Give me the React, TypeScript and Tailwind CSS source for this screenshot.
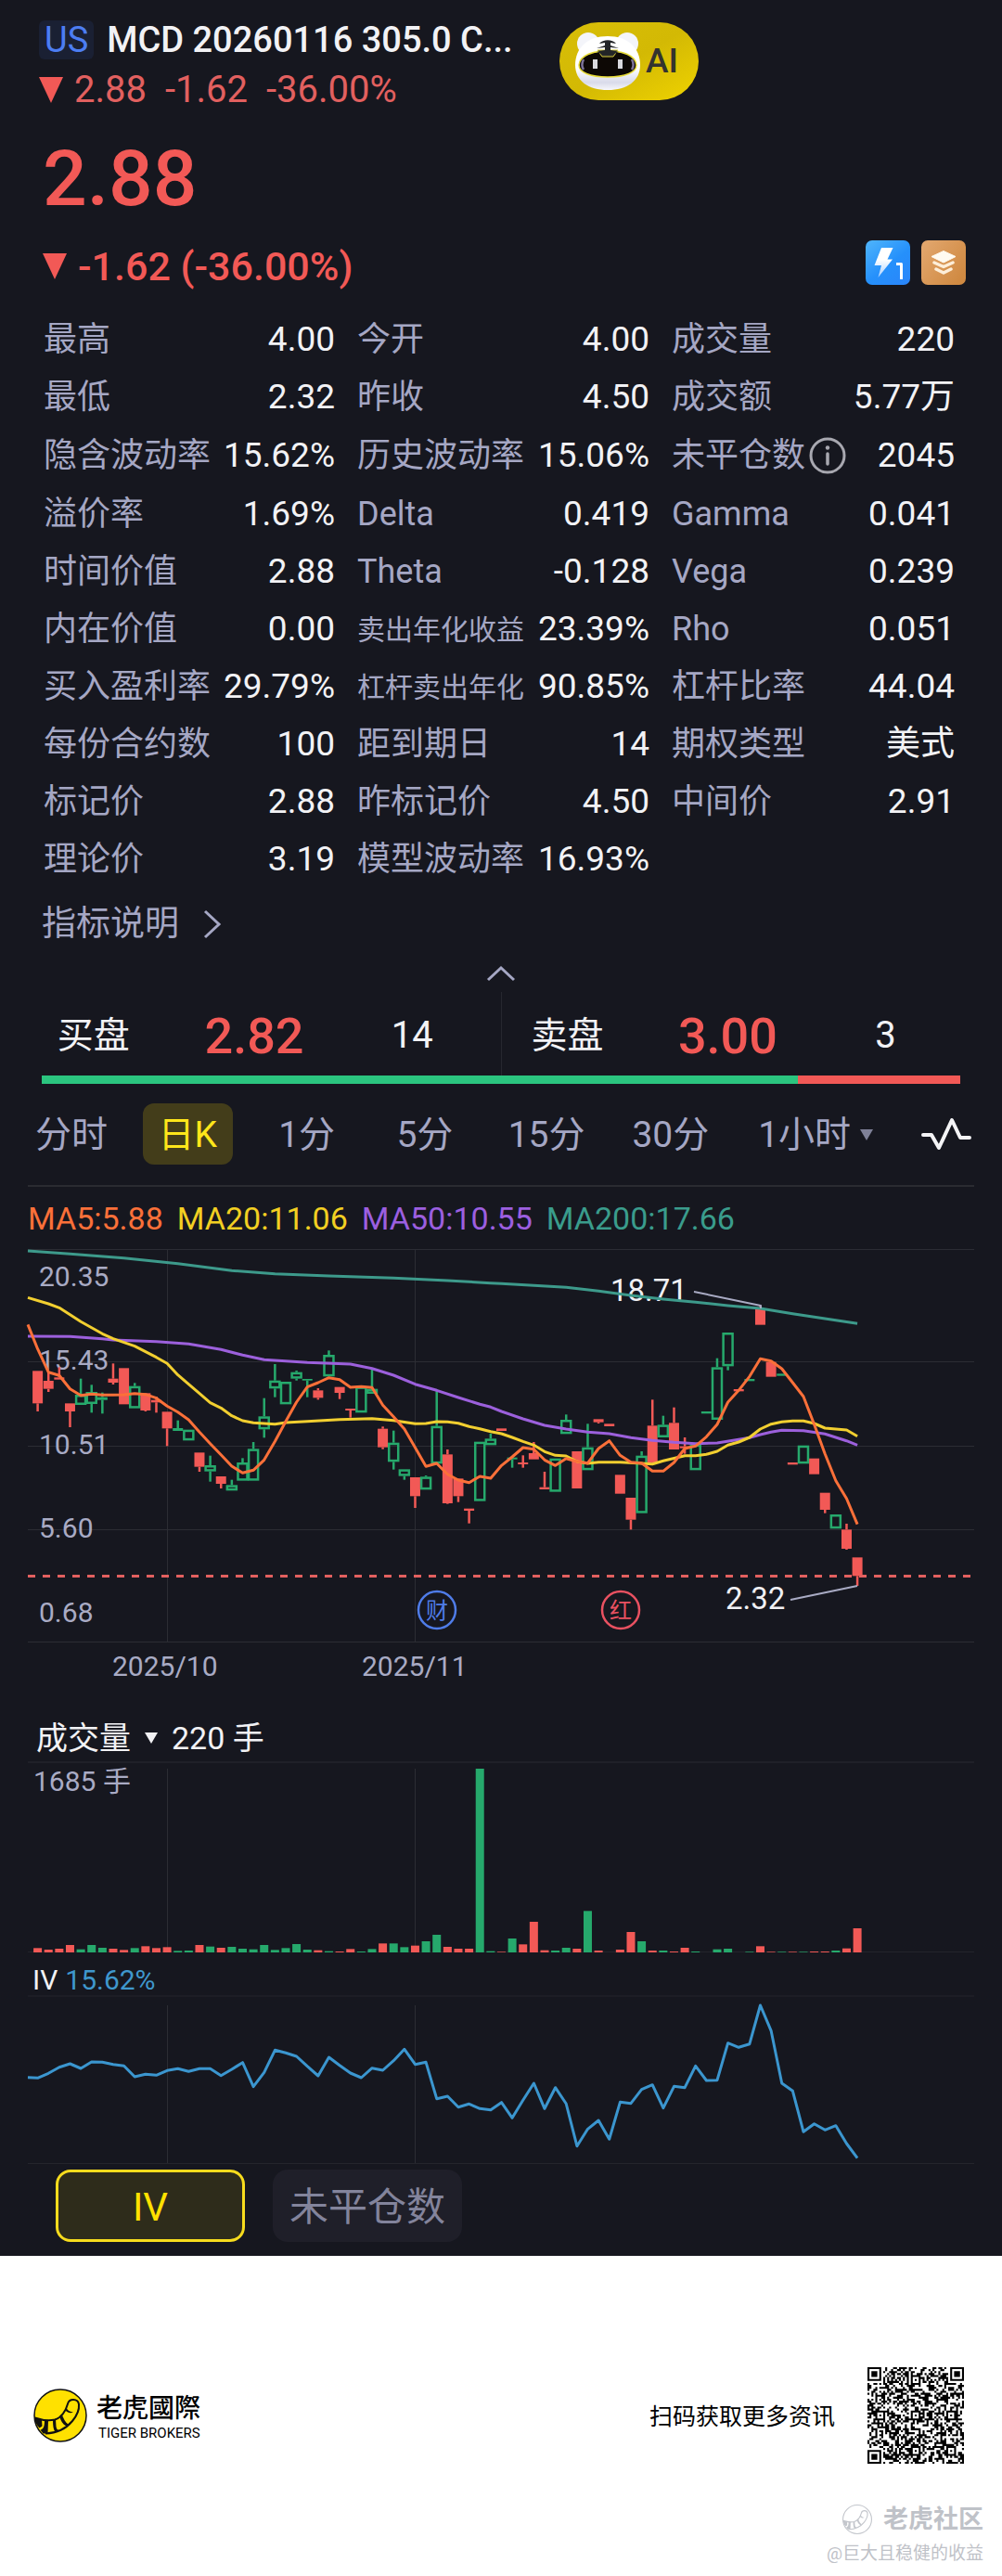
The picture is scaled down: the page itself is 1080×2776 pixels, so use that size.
import React from "react";

const RED = "#f25956";
const GREEN = "#26a96c";

type Stat = { label: string; value: string; small?: boolean; info?: boolean };

const STATS: Stat[] = [
  { label: "最高", value: "4.00" },
  { label: "今开", value: "4.00" },
  { label: "成交量", value: "220" },
  { label: "最低", value: "2.32" },
  { label: "昨收", value: "4.50" },
  { label: "成交额", value: "5.77万" },
  { label: "隐含波动率", value: "15.62%" },
  { label: "历史波动率", value: "15.06%" },
  { label: "未平仓数", value: "2045", info: true },
  { label: "溢价率", value: "1.69%" },
  { label: "Delta", value: "0.419" },
  { label: "Gamma", value: "0.041" },
  { label: "时间价值", value: "2.88" },
  { label: "Theta", value: "-0.128" },
  { label: "Vega", value: "0.239" },
  { label: "内在价值", value: "0.00" },
  { label: "卖出年化收益", value: "23.39%", small: true },
  { label: "Rho", value: "0.051" },
  { label: "买入盈利率", value: "29.79%" },
  { label: "杠杆卖出年化", value: "90.85%", small: true },
  { label: "杠杆比率", value: "44.04" },
  { label: "每份合约数", value: "100" },
  { label: "距到期日", value: "14" },
  { label: "期权类型", value: "美式" },
  { label: "标记价", value: "2.88" },
  { label: "昨标记价", value: "4.50" },
  { label: "中间价", value: "2.91" },
  { label: "理论价", value: "3.19" },
  { label: "模型波动率", value: "16.93%" },
];

/* One trading day: high, body top, body bottom, low (three units per pixel), rising or falling, volume. */
type Day = [number, number, number, number, "U" | "D", number];
const DAYS: Day[] = [
  [442, 442, 547, 573, "D", 14],
  [445, 474, 500, 510, "D", 9],
  [430, 463, 470, 470, "D", 12],
  [547, 547, 573, 624, "D", 24],
  [467, 519, 552, 552, "U", 10],
  [487, 510, 549, 577, "U", 24],
  [512, 527, 536, 580, "U", 15],
  [418, 467, 480, 486, "D", 12],
  [433, 433, 550, 550, "D", 8],
  [481, 491, 563, 563, "U", 14],
  [514, 514, 570, 573, "D", 20],
  [525, 536, 544, 577, "D", 14],
  [574, 574, 628, 685, "D", 17],
  [602, 627, 636, 636, "U", 5],
  [632, 632, 667, 667, "U", 6],
  [706, 706, 752, 768, "D", 24],
  [716, 747, 767, 800, "U", 19],
  [783, 783, 807, 822, "D", 15],
  [794, 811, 829, 829, "U", 18],
  [724, 738, 797, 797, "U", 12],
  [672, 694, 797, 797, "U", 10],
  [530, 589, 631, 658, "U", 24],
  [420, 473, 499, 527, "U", 8],
  [477, 477, 550, 550, "U", 14],
  [441, 446, 467, 473, "U", 27],
  [468, 468, 473, 527, "U", 9],
  [498, 505, 529, 535, "D", 7],
  [376, 390, 460, 460, "U", 4],
  [494, 494, 513, 533, "D", 3],
  [564, 564, 570, 593, "D", 11],
  [493, 493, 577, 577, "U", 3],
  [435, 500, 516, 516, "U", 11],
  [622, 629, 689, 695, "D", 29],
  [635, 674, 736, 761, "U", 29],
  [760, 760, 782, 794, "U", 17],
  [786, 786, 847, 885, "D", 22],
  [780, 784, 826, 826, "U", 36],
  [503, 620, 742, 742, "U", 57],
  [696, 712, 870, 872, "D", 18],
  [790, 790, 847, 866, "D", 12],
  [887, 887, 894, 935, "D", 12],
  [671, 671, 863, 863, "U", 594],
  [645, 661, 682, 682, "U", 4],
  [628, 628, 636, 636, "D", 2],
  [722, 722, 728, 755, "U", 45],
  [715, 738, 744, 755, "D", 26],
  [672, 708, 728, 728, "D", 99],
  [768, 818, 825, 825, "D", 7],
  [725, 725, 833, 833, "U", 6],
  [583, 600, 646, 646, "U", 15],
  [702, 702, 822, 822, "D", 12],
  [613, 689, 763, 763, "U", 134],
  [598, 598, 608, 612, "D", 6],
  [613, 613, 621, 621, "D", 0],
  [778, 778, 839, 839, "D", 9],
  [852, 852, 923, 955, "D", 66],
  [702, 716, 902, 902, "U", 36],
  [535, 619, 740, 740, "D", 6],
  [587, 616, 657, 657, "U", 6],
  [560, 610, 696, 696, "D", 3],
  [657, 686, 692, 710, "D", 15],
  [680, 680, 763, 763, "U", 3],
  [573, 573, 580, 580, "U", 0],
  [401, 430, 600, 600, "U", 10],
  [318, 318, 427, 440, "U", 12],
  [501, 501, 508, 508, "D", 0],
  [468, 468, 475, 475, "U", 2],
  [230, 241, 293, 293, "D", 20],
  [413, 413, 461, 461, "D", 2],
  [451, 451, 458, 458, "U", 2],
  [738, 738, 745, 745, "D", 2],
  [683, 683, 742, 742, "U", 2],
  [725, 725, 776, 776, "D", 3],
  [836, 836, 891, 902, "D", 3],
  [906, 906, 952, 952, "U", 6],
  [936, 955, 1017, 1020, "D", 13],
  [1045, 1045, 1105, 1137, "D", 78],
];

type Pt = [number, number];

const MA5 = [
  371, 446, 457, 500, 521, 517, 520, 520, 519, 515, 518, 530, 556, 575, 600, 640, 677, 713, 750, 772, 763, 730, 670,
  605, 543, 494, 480, 464, 470, 495, 493, 496, 553, 590, 630, 690, 751, 741, 776, 795, 803, 783, 789, 748, 720, 690,
  695, 730, 748, 725, 735, 740, 693, 668, 715, 737, 740, 766, 766, 738, 693, 685, 655, 615, 543, 505, 460, 403, 410,
  435, 480, 525, 615, 710, 797, 855, 938,
].map((y, i): Pt => [i, y]);

const MA20: Pt[] = [
  [1, 225], [2, 238], [3, 260], [4, 283], [6, 322], [7, 338], [9, 362], [11, 398], [12, 418], [13, 455], [14, 485],
  [15, 515], [16, 545], [17, 562], [18, 587], [19, 603], [20, 610], [22, 614], [23, 609], [25, 605], [28, 599],
  [31, 596], [33, 602], [35, 613], [36, 612], [37, 606], [38, 607], [39, 611], [40, 622], [41, 629], [42, 638],
  [43, 645], [44, 657], [45, 670], [46, 682], [47, 703], [48, 715], [49, 717], [50, 735], [51, 741], [52, 737],
  [54, 737], [56, 741], [57, 743], [58, 733], [60, 716], [61, 716], [62, 712], [63, 702], [64, 682], [65, 672],
  [66, 657], [67, 630], [68, 614], [69, 607], [70, 604], [71, 604], [72, 612], [73, 627], [74, 630], [75, 633],
  [76, 653],
];

const MA50: Pt[] = [
  [3, 331], [6, 338], [7, 342], [11, 347], [14, 355], [15, 361], [17, 373], [19, 391], [21, 406], [25, 415],
  [29, 420], [31, 434], [33, 456], [35, 485], [37, 505], [39, 528], [41, 550], [42, 559], [43, 573], [45, 597],
  [47, 618], [49, 630], [51, 640], [53, 645], [55, 658], [57, 667], [59, 673], [61, 677], [63, 675], [65, 664],
  [66, 658], [67, 648], [68, 640], [69, 634], [71, 635], [73, 646], [75, 668], [76, 682],
];

const MA200: Pt[] = [
  [3, 64], [8, 77], [13, 95], [15, 104], [18, 118], [22, 128], [27, 135], [33, 142], [38, 150], [42, 158], [43, 160],
  [49, 172], [52, 184], [55, 198], [58, 210], [61, 220], [64, 231], [67, 240], [70, 257], [73, 273], [76, 289],
];

const IV = [
  328, 313, 293, 282, 297, 276, 277, 284, 289, 324, 316, 319, 304, 298, 307, 298, 298, 320, 300, 278, 356, 310, 238,
  247, 258, 290, 321, 261, 287, 312, 327, 296, 303, 272, 235, 284, 277, 395, 387, 422, 412, 427, 431, 407, 457, 400,
  345, 427, 359, 411, 548, 493, 465, 526, 406, 410, 365, 350, 425, 355, 359, 289, 336, 335, 215, 229, 218, 93, 175,
  345, 370, 502, 476, 496, 482, 540, 587,
].map((y, i): Pt => [i, y]);

const dayX = (i: number) => 40.6 + i * 11.625;
const linePath = (startY: number, pts: Pt[]) =>
  `M30 ${startY / 3}` + pts.map(([i, y]) => `L${dayX(i).toFixed(1)} ${(y / 3).toFixed(1)}`).join("");

function Candle({ day, index }: { day: Day; index: number }) {
  const [high, top, bottom, low, dir] = day;
  const x = dayX(index);
  const t = top / 3;
  const b = bottom / 3;
  const color = dir === "U" ? GREEN : RED;
  const hollow = dir === "U" && b - t > 4;
  return (
    <g>
      {high < top && <rect x={x - 1.25} y={high / 3} width={2.5} height={t - high / 3} fill={color} />}
      {low > bottom && <rect x={x - 1.25} y={b} width={2.5} height={(low - bottom) / 3} fill={color} />}
      {hollow ? (
        <rect x={x - 5} y={t + 1.25} width={10} height={b - t - 2.5} fill="none" stroke={color} strokeWidth={2.5} />
      ) : (
        <rect x={x - 5.5} y={t} width={11} height={b - t} fill={color} />
      )}
    </g>
  );
}

function PriceChart() {
  return (
    <svg viewBox="0 10 1080 480" className="block h-auto w-full" role="img" aria-label="日K线图">
      <g stroke="#2c2d34" strokeWidth={1}>
        {[16.5, 137.5, 228.5, 318.5, 439.5].map((y) => (
          <line key={y} x1={30} x2={1050} y1={y} y2={y} />
        ))}
        <line x1={180.5} x2={180.5} y1={16} y2={439} />
        <line x1={447.5} x2={447.5} y1={16} y2={439} />
      </g>
      <g fill="#a9abc4" fontSize={30}>
        <text x={42} y={56}>20.35</text>
        <text x={42} y={146}>15.43</text>
        <text x={42} y={237}>10.51</text>
        <text x={42} y={327}>5.60</text>
        <text x={42} y={418}>0.68</text>
        <text x={121} y={476}>2025/10</text>
        <text x={390} y={476}>2025/11</text>
      </g>
      <g fill="#f0f0f4" fontSize={33}>
        <text x={658} y={72}>18.71</text>
        <text x={782} y={404}>2.32</text>
      </g>
      {DAYS.map((d, i) => (
        <Candle key={i} day={d} index={i} />
      ))}
      <line x1={30} x2={1046} y1={368.5} y2={368.5} stroke="#e2605f" strokeWidth={3} strokeDasharray="8 8" />
      <g fill="none" strokeLinejoin="round">
        <path d={linePath(54, MA200)} stroke="#3d9a8b" strokeWidth={3} />
        <path d={linePath(330, MA50)} stroke="#9c60dc" strokeWidth={3} />
        <path d={linePath(205, MA20)} stroke="#f2cf30" strokeWidth={3} />
        <path d={linePath(292, MA5)} stroke="#fb7039" strokeWidth={3} />
        <path d="M748 62 820 77v3M852 394l72-15" stroke="#a9abc4" strokeWidth={2} />
      </g>
      <g fontSize={24} textAnchor="middle">
        <circle cx={471} cy={405} r={20} fill="none" stroke="#4f7ce8" strokeWidth={2.5} />
        <text x={471} y={414} fill="#4f7ce8">财</text>
        <circle cx={669} cy={405} r={20} fill="none" stroke="#e95161" strokeWidth={2.5} />
        <text x={669} y={414} fill="#e95161">红</text>
      </g>
    </svg>
  );
}

function VolumeChart() {
  return (
    <svg viewBox="0 0 1080 210" className="block h-auto w-full" role="img" aria-label="成交量柱状图">
      <line x1={30} x2={1050} y1={1} y2={1} stroke="#1f2028" strokeWidth={2} />
      <line x1={30} x2={1050} y1={205.5} y2={205.5} stroke="#24252b" />
      <path d="M180.5 8V206M447.5 8V206" stroke="#2c2d34" />
      <text x={36} y={32} fontSize={30} fill="#a9abc4">1685 手</text>
      {DAYS.map(([, , , , dir, v], i) => (
        <rect key={i} x={dayX(i) - 4.5} y={206 - v / 3} width={9} height={v / 3} fill={dir === "U" ? GREEN : RED} />
      ))}
    </svg>
  );
}

function IvChart() {
  return (
    <svg viewBox="0 20 1080 184" className="block h-auto w-full" role="img" aria-label="IV走势图">
      <line x1={30} x2={1050} y1={21} y2={21} stroke="#24252c" strokeWidth={1} />
      <line x1={30} x2={1050} y1={201.5} y2={201.5} stroke="#24252c" strokeWidth={1} />
      <path d="M180.5 31V201M447.5 31V201" stroke="#2c2d34" />
      <path d={linePath(326, IV)} fill="none" stroke="#3b96cf" strokeWidth={3} strokeLinejoin="round" />
    </svg>
  );
}

function DownTriangle() {
  return (
    <svg viewBox="0 0 26 28" className="h-7 w-[26px] shrink-0" aria-hidden="true">
      <path d="M0 0h26L13 28z" fill={RED} />
    </svg>
  );
}

function TigerBot() {
  return (
    <svg viewBox="0 0 72 64" className="h-16 w-[72px] shrink-0" aria-hidden="true">
      <defs>
        <linearGradient id="bot-face" x1="0" y1="0" x2="0" y2="1">
          <stop offset="0.6" stopColor="#fff" />
          <stop offset="0.86" stopColor="#d9dbea" />
          <stop offset="1" stopColor="#f7f7fc" />
        </linearGradient>
      </defs>
      <circle cx="15" cy="13" r="12" fill="#f4f5fa" />
      <circle cx="57" cy="13" r="12" fill="#f4f5fa" />
      <path d="M36 5C14 5 1 18 1 36c0 17 14 27 35 27s35-10 35-27C71 18 58 5 36 5z" fill="url(#bot-face)" />
      <path
        d="M36 22C20 20 6 26 5 36c0 8 12 13 31 13s31-5 31-13C66 26 52 20 36 22z"
        fill="#0d0805"
        stroke="#e8dc3a"
        strokeWidth="1.5"
      />
      <path d="M10 30c-2 4-2 8 0 11M62 30c2 4 2 8 0 11" fill="none" stroke="#7c7399" strokeWidth="2.5" />
      <path d="M25 20h22l-5 7H30z" fill="#2b2b2b" stroke="#d6cc3c" strokeWidth="1" />
      <path
        d="M27 13c4-5 14-5 18 0l-6-1v3l9 3-9-1v3l9 2-7 3H31l-7-3 9-2v-3l-9 1 9-3v-3z"
        fill="#222427"
      />
      <rect x="20" y="30" width="5" height="10" fill="#d9d9de" />
      <rect x="47" y="30" width="5" height="10" fill="#d9d9de" />
    </svg>
  );
}

function FlashIcon() {
  return (
    <svg viewBox="0 0 48 48" className="size-12" aria-hidden="true">
      <defs>
        <linearGradient id="flash-bg" x1="0.1" y1="0" x2="0.9" y2="1">
          <stop offset="0" stopColor="#4cb2fb" />
          <stop offset="0.55" stopColor="#2590fb" />
          <stop offset="1" stopColor="#2a86fa" />
        </linearGradient>
        <linearGradient id="flash-fg" x1="0" y1="0" x2="0" y2="1">
          <stop offset="0.4" stopColor="#fff" />
          <stop offset="1" stopColor="#a8d0ff" />
        </linearGradient>
      </defs>
      <rect width="48" height="48" rx="7" fill="url(#flash-bg)" />
      <path d="M17 8h12.500l-6 12.500H29L13.500 40l3.500-13H9.500z" fill="url(#flash-fg)" />
      <path d="M33 25.500h5.500V42" fill="none" stroke="#fff" strokeWidth="3" strokeLinejoin="round" />
    </svg>
  );
}

function LayersIcon() {
  return (
    <svg viewBox="0 0 48 48" className="size-12" aria-hidden="true">
      <defs>
        <linearGradient id="layers-bg" x1="0" y1="0" x2="1" y2="0.7">
          <stop offset="0" stopColor="#e3a870" />
          <stop offset="1" stopColor="#d08a42" />
        </linearGradient>
      </defs>
      <rect width="48" height="48" rx="7" fill="url(#layers-bg)" />
      <path d="M24 11.500 37 17.500 24 24 11 17.500z" fill="#fffaf0" stroke="#fffaf0" strokeWidth="1" strokeLinejoin="round" />
      <path d="m14 24 10 4.500 10-4.500M16 31l8 4 8-4" fill="none" stroke="#fdeed9" strokeWidth="3.500" strokeLinecap="round" strokeLinejoin="round" />
    </svg>
  );
}

function InfoIcon() {
  return (
    <svg viewBox="0 0 40 40" className="size-10" aria-hidden="true">
      <circle cx="20" cy="20" r="18" fill="none" stroke="#a8a8b0" strokeWidth="3" />
      <circle cx="20" cy="11.500" r="2.200" fill="#a8a8b0" />
      <path d="M20 18v11" stroke="#a8a8b0" strokeWidth="3.500" strokeLinecap="round" />
    </svg>
  );
}

function TigerTailLogo({ className, mono }: { className: string; mono?: boolean }) {
  const ink = mono ? "#c3c6cc" : "#111";
  return (
    <svg viewBox="0 0 58 58" className={className} aria-hidden="true">
      <circle cx="29" cy="29" r="28" fill={mono ? "#fff" : "#ffe100"} stroke={ink} strokeWidth={mono ? 2 : 1.5} />
      <path
        d="M1.500 31.500C9 34 17 35 23 33.500 30 31.500 35 24 37 16.500c1.500-6 11-6 12 .5.500 5-2 12-7 18C35 43.500 26 48 13 48.500"
        fill="none"
        stroke={ink}
        strokeWidth="2"
      />
      <path d="M1.500 31.500l7.500 2 .5 7-3 2C3 39 1.500 35 1.500 31.500zM12 34l4 .5-.5 14-5 0-3-4c4-1 4.500-5 4.500-10.500zM21 34l3-1 .5 8c.5 3 2 4 4 4l-5 2c-2-3-2.500-7-2.500-13zM28 30l2.500-2.500c2 5 4 9 7 11l-2 2c-4-2-6-6-7.500-10.500zM34 23l1.500-2c2 3 4 4 7.500 4.500-3 1.500-7 .5-9-2.500z" fill={ink} />
    </svg>
  );
}

const QR_SIZE = 49;

function qrDark(x: number, y: number): boolean {
  const centres: Pt[] = [[3, 3], [QR_SIZE - 4, 3], [3, QR_SIZE - 4]];
  for (const [cx, cy] of centres) {
    const d = Math.max(Math.abs(x - cx), Math.abs(y - cy));
    if (d <= 4) return d !== 2 && d !== 4;
  }
  const aligns: Pt[] = [[24, 6], [6, 24], [24, 24], [42, 24], [24, 42], [42, 42]];
  for (const [cx, cy] of aligns) {
    const d = Math.max(Math.abs(x - cx), Math.abs(y - cy));
    if (d <= 2) return d !== 1;
  }
  if (x === 6) return y % 2 === 0;
  if (y === 6) return x % 2 === 0;
  let h = (x * 374761393 + y * 668265263) | 0;
  h = Math.imul(h ^ (h >>> 13), 1274126177);
  return ((h ^ (h >>> 16)) & 255) < 132;
}

function QrCode() {
  let d = "";
  for (let y = 0; y < QR_SIZE; y++) for (let x = 0; x < QR_SIZE; x++) if (qrDark(x, y)) d += `M${x} ${y}h1v1h-1z`;
  return (
    <svg viewBox={`0 0 ${QR_SIZE} ${QR_SIZE}`} className="size-[104px]" role="img" aria-label="二维码">
      <path d={d} fill="#000" />
    </svg>
  );
}

function Quote({ side, price, size }: { side: string; price: string; size: string }) {
  return (
    <div className="grid grid-cols-[142fr_206fr_136fr] items-center pt-1 pr-7 text-center">
      <span className="text-[39px]">{side}</span>
      <span className="text-[54px] font-medium text-[#f25956]">{price}</span>
      <span className="text-[40px]">{size}</span>
    </div>
  );
}

const TABS = ["分时", "日K", "1分", "5分", "15分", "30分"];

export default function App() {
  return (
    <div className="w-full bg-white font-[Roboto,'Noto_Sans_CJK_SC',sans-serif]">
      <main className="bg-[#16171f] pb-[15px] text-[#f2f2f5]">
        <header className="flex items-start gap-[47px] px-[42px] pt-[22px]">
          <div className="w-[514px]">
            <h1 className="flex h-[42px] items-center gap-[14px]">
              <span className="rounded-md bg-[#1a2033] px-[6px] text-[38px] leading-[42px] font-normal text-[#4c7df2]">US</span>
              <span className="text-[38px] leading-[42px] font-medium whitespace-nowrap">MCD 20260116 305.0 C...</span>
            </h1>
            <p className="mt-2 flex h-[50px] items-center text-[40px] text-[#e2605f]">
              <DownTriangle />
              <span className="ml-3">2.88</span>
              <span className="ml-5">-1.62</span>
              <span className="ml-5">-36.00%</span>
            </p>
          </div>
          <button
            type="button"
            className="mt-[2px] flex h-[84px] w-[150px] items-center rounded-full bg-linear-to-br from-[#d8be08] via-[#d3b904] to-[#efd300] pl-4"
          >
            <TigerBot />
            <span className="ml-[5px] text-[37px] font-medium text-[#33332f]">AI</span>
          </button>
        </header>

        <section className="px-[46px] pt-[21px]">
          <p className="text-[84px] leading-[100px] font-medium text-[#f25956]">2.88</p>
          <div className="mt-[18px] flex h-[52px] items-center justify-between">
            <p className="flex items-center gap-3 text-[43px] leading-[52px] font-medium text-[#f25956]">
              <DownTriangle />
              -1.62 (-36.00%)
            </p>
            <div className="-mr-[7px] flex gap-3 pb-2">
              <button type="button" aria-label="闪电下单">
                <FlashIcon />
              </button>
              <button type="button" aria-label="分层">
                <LayersIcon />
              </button>
            </div>
          </div>
        </section>

        <dl className="mt-[22px] grid grid-cols-[314fr_315fr_305fr] gap-x-6 pr-[51px] pl-[47px]">
          {STATS.map((s, i) => (
            <div key={i} className={`flex items-center justify-between whitespace-nowrap ${i > 5 && i < 9 ? "h-16" : "h-[62px]"}`}>
              <dt className={`flex items-center text-[#a5a7c4] ${s.small ? "text-[30px]" : "text-[36px]"}`}>
                {s.label}
                {s.info && (
                  <button type="button" aria-label="说明" className="ml-1">
                    <InfoIcon />
                  </button>
                )}
              </dt>
              <dd className="text-[37px]">{s.value}</dd>
            </div>
          ))}
        </dl>

        <a href="#indicators" className="mt-[13px] ml-[45px] inline-flex h-[52px] items-center gap-[26px] text-[37px] text-[#a5a7c4]">
          指标说明
          <svg viewBox="0 0 20 32" className="h-8 w-5" aria-hidden="true">
            <path d="M2 2 17 16 2 30" fill="none" stroke="#a5a7c4" strokeWidth="3" />
          </svg>
        </a>
        <button type="button" aria-label="收起" className="mx-auto mt-[15px] flex h-6 items-center">
          <svg viewBox="0 0 32 18" className="h-[18px] w-8" aria-hidden="true">
            <path d="M2 16 16 3l14 13" fill="none" stroke="#a5a7c4" strokeWidth="3" />
          </svg>
        </button>

        <section className="mt-2 px-[30px]">
          <div className="grid h-[90px] grid-cols-2">
            <Quote side="买盘" price="2.82" size="14" />
            <div className="grid border-l border-[#26272f]">
              <Quote side="卖盘" price="3.00" size="3" />
            </div>
          </div>
          <div className="mx-[15px] flex h-[9px]">
            <div className="grow-[14] bg-[#2bc57f]" />
            <div className="grow-[3] bg-[#f25956]" />
          </div>
        </section>

        <nav className="mt-[21px] grid h-[66px] grid-cols-[128fr_122fr_134fr_120fr_142fr_125fr_188fr_92fr] justify-items-center pr-[14px] pl-[13px] text-[39px] text-[#a5a7c4]">
          {TABS.map((t) => (
            <button
              key={t}
              type="button"
              className={t === "日K" ? "rounded-xl bg-[#433d1a] px-[17px] pt-[2px] text-[#ffe61a]" : "pt-[2px] whitespace-nowrap"}
            >
              {t}
            </button>
          ))}
          <button type="button" className="flex items-center gap-[9px] pt-[2px] whitespace-nowrap">
            1小时
            <svg viewBox="0 0 16 12" className="h-3 w-4" aria-hidden="true">
              <path d="M1 0h14L8 12z" fill="#7f8198" />
            </svg>
          </button>
          <button type="button" aria-label="指标">
            <svg viewBox="0 0 54 38" className="h-[38px] w-[54px]" aria-hidden="true">
              <path d="M2 20h9l8 14L33 4l9 19h10" fill="none" stroke="#f4f4f6" strokeWidth="4" strokeLinecap="round" strokeLinejoin="round" />
            </svg>
          </button>
        </nav>

        <hr className="mx-[30px] mt-[22px] border-t-2 border-[#2a2b31]" />
        <p className="mt-[14px] flex gap-[15px] pl-[30px] text-[34px] leading-10 whitespace-nowrap">
          <span className="text-[#fb7039]">MA5:5.88</span>
          <span className="text-[#f2cf22]">MA20:11.06</span>
          <span className="text-[#9c5fe0]">MA50:10.55</span>
          <span className="text-[#3a9c8c]">MA200:17.66</span>
        </p>
        <div className="mt-[7px]">
          <PriceChart />
        </div>

        <button type="button" className="mt-[29px] ml-[39px] flex h-12 items-center text-[34px]">
          成交量
          <svg viewBox="0 0 16 12" className="mx-[14px] h-3 w-4" aria-hidden="true">
            <path d="M1 0h14L8 12z" fill="#f2f2f5" />
          </svg>
          220 手
        </button>
        <div className="mt-[1px]">
          <VolumeChart />
        </div>
        <p className="mt-2 ml-[35px] flex h-[34px] items-center gap-2 text-[30px]">
          IV <span className="text-[#3f97cd]">15.62%</span>
        </p>
        <IvChart />

        <div className="mt-1 flex gap-[30px] pl-[60px]">
          <button type="button" className="h-[78px] w-[204px] rounded-2xl border-3 border-[#f7dc1d] bg-[#2e2c1b] pt-[2px] text-[42px] text-[#ffe100]">
            IV
          </button>
          <button type="button" className="h-[78px] w-[204px] rounded-2xl bg-[#1f1f29] pt-[2px] text-[42px] text-[#83849c]">
            未平仓数
          </button>
        </div>
      </main>

      <footer className="px-[36px] pt-[120px] pb-[10px] text-black">
        <div className="flex items-center justify-between pr-[5px]">
          <div className="flex items-center gap-[10px]">
            <TigerTailLogo className="size-[58px]" />
            <div className="pt-[3px] font-[Roboto,'Noto_Sans_CJK_TC',sans-serif]">
              <p className="text-[28px] leading-[34px] font-medium">老虎國際</p>
              <p className="pl-[2px] text-[15px] leading-[18px]">TIGER BROKERS</p>
            </div>
          </div>
          <div className="flex items-center gap-[35px]">
            <p className="pt-[3px] text-[25px]">扫码获取更多资讯</p>
            <QrCode />
          </div>
        </div>
        <div className="-mr-4 mt-10 flex flex-col items-end text-[#bfc2c8]">
          <p className="flex h-10 items-center gap-3 text-[27px] font-bold">
            <TigerTailLogo className="size-8" mono />
            老虎社区
          </p>
          <p className="flex h-[30px] items-center pt-1 text-[19px]">@巨大且稳健的收益</p>
        </div>
      </footer>
    </div>
  );
}
